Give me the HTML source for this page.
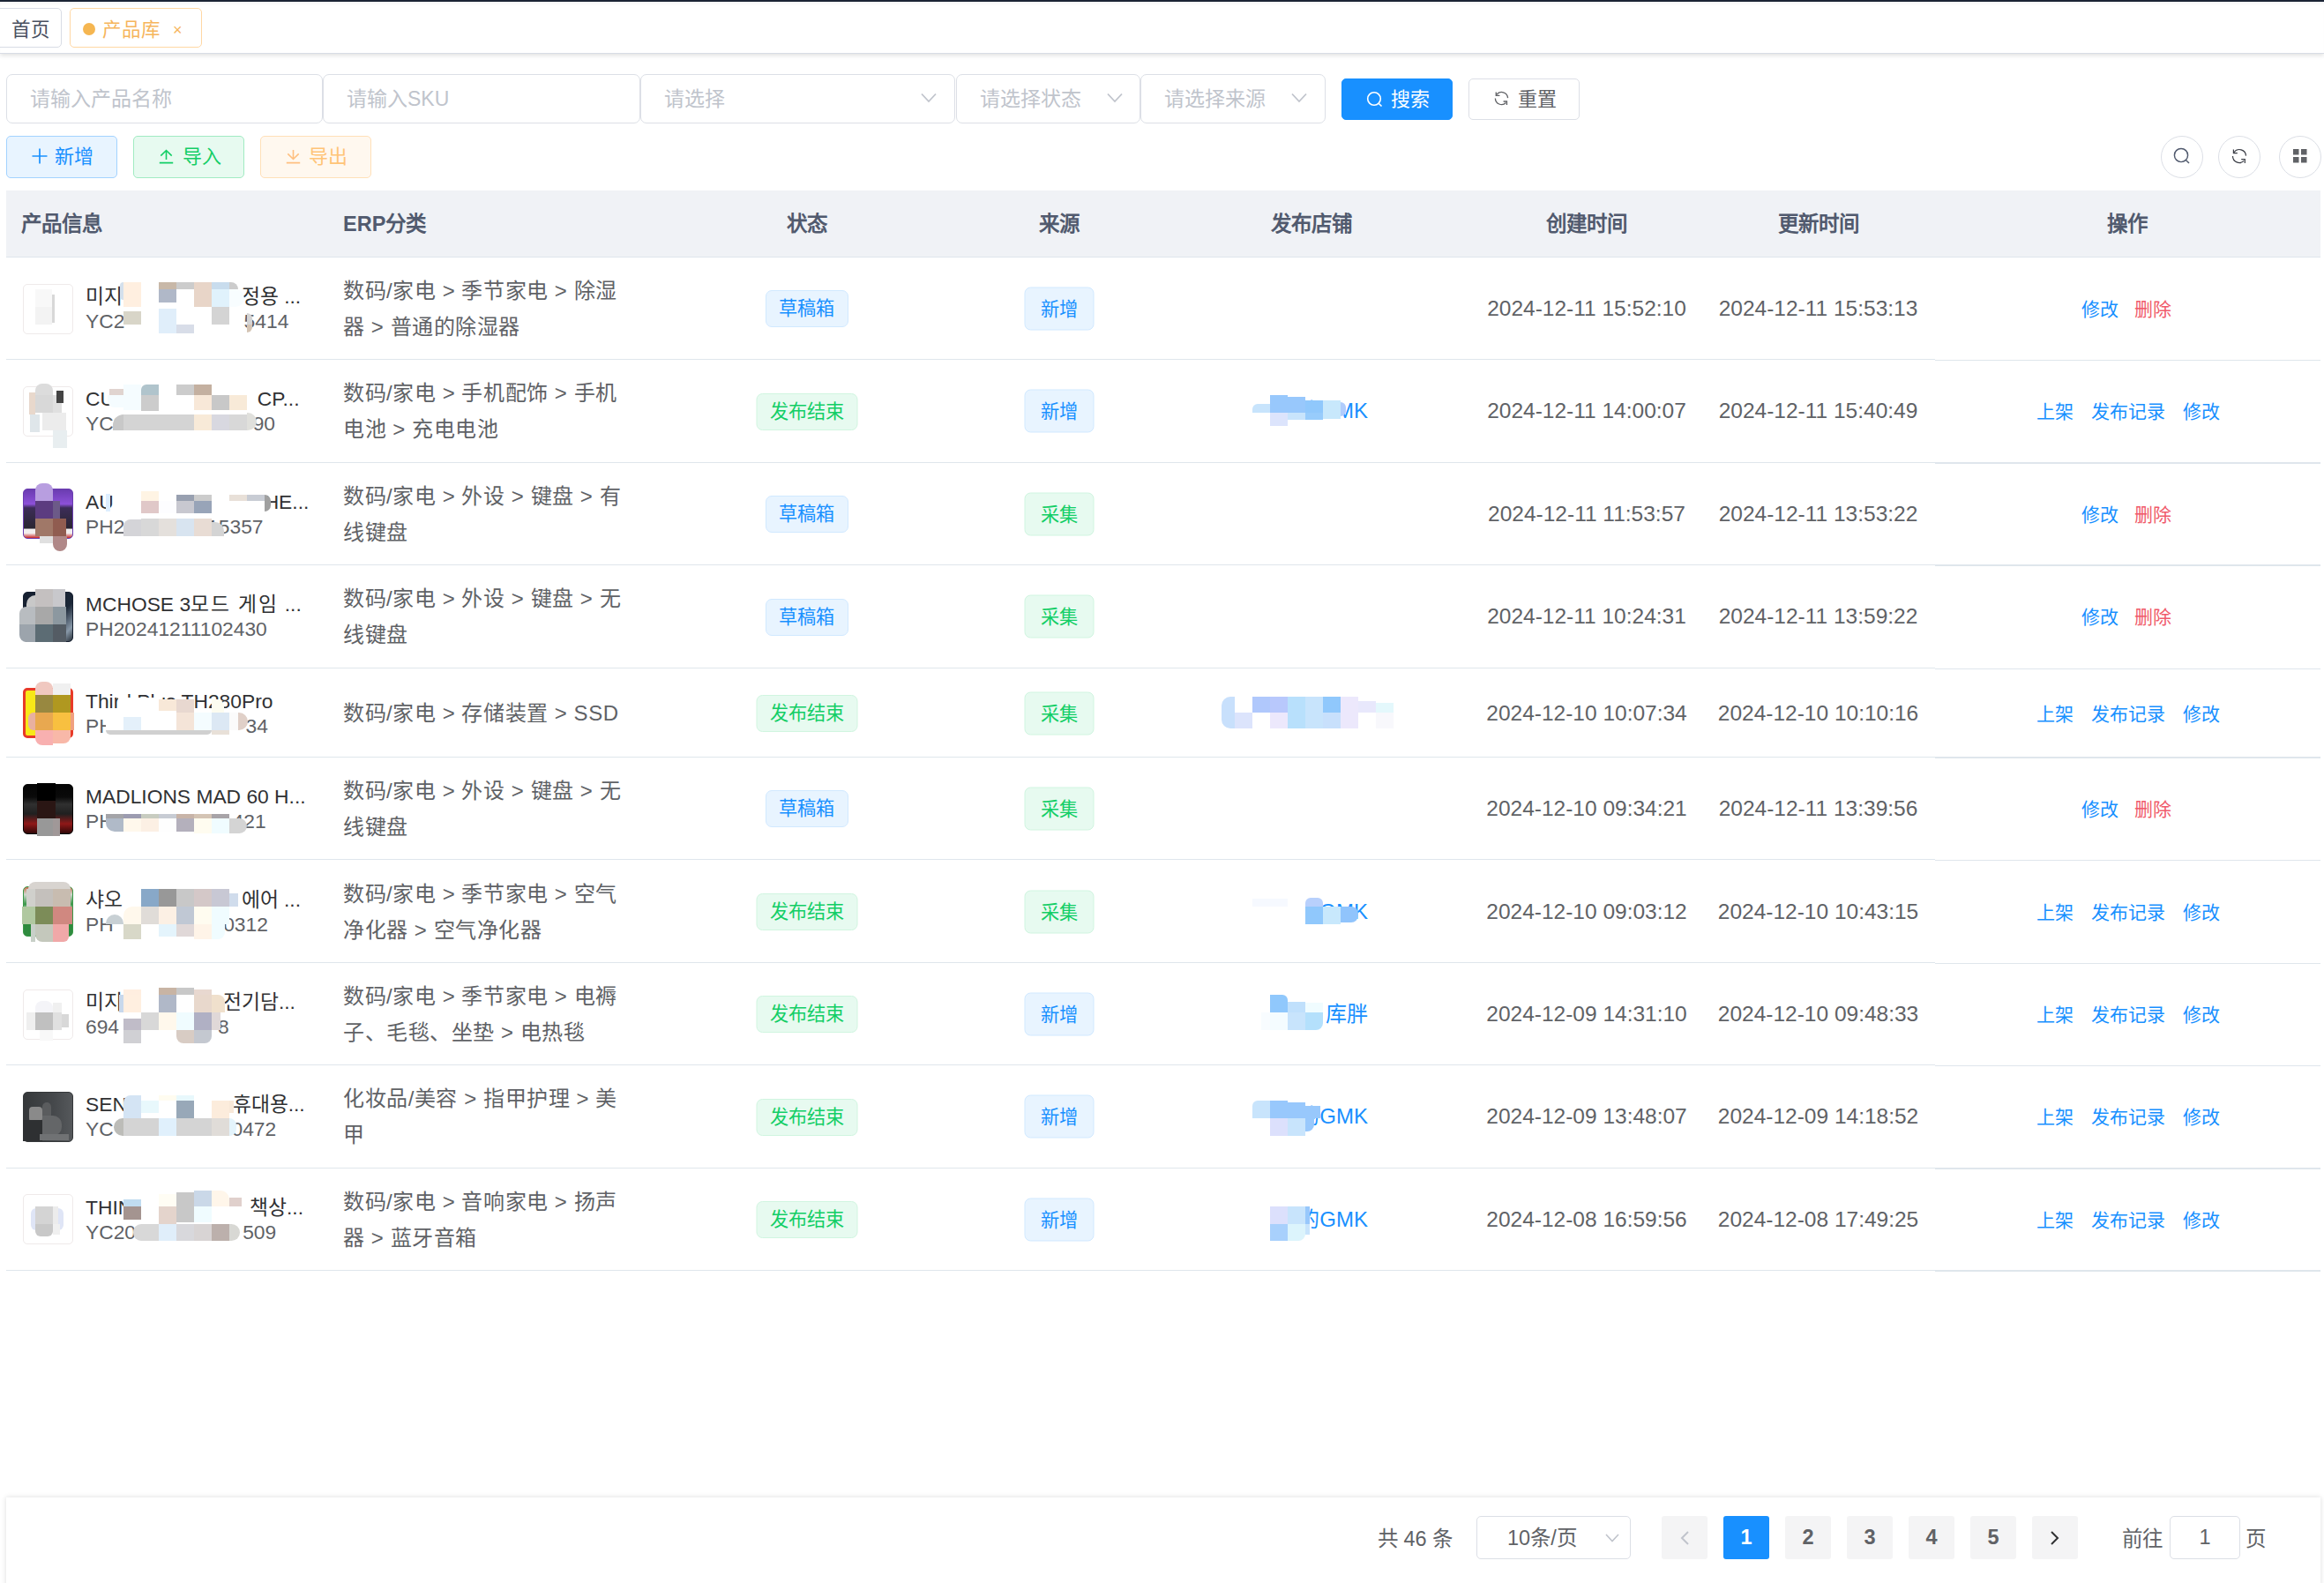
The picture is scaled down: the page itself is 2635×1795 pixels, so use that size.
<!DOCTYPE html>
<html lang="zh-CN">
<head>
<meta charset="utf-8">
<style>
*{box-sizing:border-box;margin:0;padding:0}
html,body{width:2635px;height:1795px;overflow:hidden;background:#fff;font-family:"Liberation Sans",sans-serif;color:#606266;font-weight:350}
.a{position:absolute}
#topbar{left:0;top:0;width:2635px;height:2px;background:#1c2536}
#tabs{left:0;top:2px;width:2635px;height:59px;background:#fff;box-shadow:inset 0 4px 5px -3px rgba(0,0,0,.06),0 2px 5px rgba(0,0,0,.12);border-bottom:1px solid #d8dce5}
.tab{position:absolute;top:9px;height:45px;border:1.5px solid #d8dce5;border-radius:5px;font-size:21.5px;line-height:48px;color:#495060;background:#fff}
.inp{position:absolute;top:84px;height:56px;border:1.5px solid #dcdfe6;border-radius:7px;background:#fff;font-size:23px;line-height:55px;color:#c0c4cc;padding-left:26px}
.chev{position:absolute;top:20px;width:18px;height:12px}
.btn{position:absolute;border-radius:5px;font-size:22px;text-align:center;border:1.5px solid #dcdfe6;background:#fff;color:#606266}
.cbtn{position:absolute;top:154px;width:48px;height:48px;border-radius:50%;border:1.5px solid #dcdfe6;background:#fff}
#thead{left:7px;top:216px;width:2624px;height:76.2px;background:#f0f2f6;border-bottom:1.5px solid #dfe6ec}
.th{position:absolute;top:0;line-height:76px;font-size:23.5px;font-weight:bold;color:#515a6e;white-space:nowrap}
.thc{transform:translateX(-50%)}
.row{position:absolute;left:7px;width:2624px;border-bottom:1.5px solid #dfe6ec}
.pimg{position:absolute;left:18.5px;width:57px;height:57px;border:1.5px solid #efeaea;border-radius:5px;background:#fff;overflow:hidden}
.pname{position:absolute;left:90px;font-size:22.8px;line-height:28px;white-space:nowrap}
.nm{color:#303133}
.sku{color:#606266}
.cat{position:absolute;left:382px;font-size:24px;line-height:41px;letter-spacing:0.55px;font-weight:350;color:#606266;white-space:nowrap}
.tagc{position:absolute;width:0;height:0}
.tag{position:absolute;transform:translate(-50%,-50%);white-space:nowrap;border:1.5px solid;border-radius:7px;font-size:21.2px;text-align:center}
.tag.sm{height:42px;line-height:40px;padding:0 14.5px}
.tag.md{height:49px;line-height:47px;padding:0 17.5px}
.tb{background:#e8f4ff;border-color:#d1e9ff;color:#1890ff}
.tg{background:#e7faf0;border-color:#d0f5e0;color:#13ce66}
.date{position:absolute;transform:translate(-50%,-50%);font-size:24.5px;line-height:32px;white-space:nowrap;color:#606266}
.ops{position:absolute;transform:translateY(-50%);font-size:21px;line-height:33px;white-space:nowrap}
.lk{color:#1890ff}
.lk.red{color:#f05a6a}
#footer{left:7px;top:1698px;width:2624px;height:120px;background:#fff;box-shadow:0 0 6px rgba(0,0,0,.14)}
.pgt{font-size:23.5px;line-height:30px;color:#606266;white-space:nowrap}
.psel{border:1.5px solid #dcdfe6;border-radius:5px;font-size:23.5px;line-height:48px;padding-left:34px;color:#606266}
.pbtn{top:1719px;width:52px;height:49px;border-radius:3px;background:#f4f4f5;font-size:23.5px;font-weight:bold;line-height:49px;text-align:center;color:#606266}
.pbtn.act{background:#1890ff;color:#fff}
.pinp{border:1.5px solid #dcdfe6;border-radius:5px;font-size:23.5px;line-height:46px;text-align:center;color:#606266}
.shop{position:absolute;right:1080px;transform:translateY(-50%);font-size:24px;line-height:32px;color:#1890ff;white-space:nowrap}
.mz{position:absolute}

</style>
</head>
<body>
<div id="topbar" class="a"></div>
<div id="tabs" class="a"></div>
<div class="tab" style="left:-6px;width:76px;padding-left:18px">首页</div>
<div class="tab" style="left:79px;width:150px;border-color:#ffd8a4;color:#f6b55c;padding-left:35.5px"><span class="a" style="left:14px;top:16px;width:14px;height:14px;border-radius:50%;background:#f5b651"></span>产品库<span class="a" style="left:116px;top:-0.5px;font-size:18px">×</span></div>

<div class="inp" style="left:7px;width:359px">请输入产品名称</div>
<div class="inp" style="left:366px;width:360px">请输入SKU</div>
<div class="inp" style="left:726px;width:357px">请选择<svg class="chev" style="left:317px" viewBox="0 0 18 12"><path d="M1 1.5 L9 10 L17 1.5" fill="none" stroke="#c0c4cc" stroke-width="1.8"/></svg></div>
<div class="inp" style="left:1084px;width:209px">请选择状态<svg class="chev" style="left:170px" viewBox="0 0 18 12"><path d="M1 1.5 L9 10 L17 1.5" fill="none" stroke="#c0c4cc" stroke-width="1.8"/></svg></div>
<div class="inp" style="left:1293px;width:210px">请选择来源<svg class="chev" style="left:170px" viewBox="0 0 18 12"><path d="M1 1.5 L9 10 L17 1.5" fill="none" stroke="#c0c4cc" stroke-width="1.8"/></svg></div>

<div class="btn" style="left:1521px;top:89px;width:126px;height:47px;line-height:45.5px;background:#1890ff;border-color:#1890ff;color:#fff">
<svg class="a" style="left:26.5px;top:12.5px" width="20" height="20" viewBox="0 0 20 20"><circle cx="9" cy="9" r="7.3" fill="none" stroke="#fff" stroke-width="1.6"/><path d="M14.2 14.2 L17.5 17.5" stroke="#fff" stroke-width="1.6"/></svg><span style="margin-left:29px">搜索</span></div>
<div class="btn" style="left:1665px;top:89px;width:126px;height:47px;line-height:45.5px">
<svg class="a" style="left:27.5px;top:13px" width="17" height="17" viewBox="0 0 18 18"><g fill="none" stroke="#606266" stroke-width="1.4"><path d="M3 4.6 A7.5 7.5 0 0 1 16.5 8.6"/><path d="M2.4 1.5 V5.7 H6.8"/><path d="M1.5 9 A7.5 7.5 0 0 0 14.2 14.4"/><path d="M11.2 12.7 H15.3 V17"/></g></svg><span style="margin-left:29px">重置</span></div>

<div class="btn" style="left:7px;top:154px;width:126px;height:48px;line-height:45px;background:#e8f4ff;border-color:#a3d3ff;color:#1890ff"><svg width="18" height="18" viewBox="0 0 18 18" style="vertical-align:-2px;margin-right:9.3px;position:relative;left:1.7px;top:-0.7px"><path d="M9 0.5 V17.5 M0.5 9 H17.5" stroke="#1890ff" stroke-width="1.7"/></svg>新增</div>
<div class="btn" style="left:151px;top:154px;width:126px;height:48px;line-height:45px;background:#e7faf0;border-color:#a1ebc2;color:#13ce66"><svg width="17" height="17" viewBox="0 0 17 17" style="vertical-align:-2px;margin-right:12px;position:relative;left:2px;top:-1.5px"><path d="M8.5 12 V1.5 M2.3 7.6 L8.5 1.5 L14.7 7.6 M0.8 15.6 H16.2" fill="none" stroke="#13ce66" stroke-width="1.6"/></svg>导入</div>
<div class="btn" style="left:295px;top:154px;width:126px;height:48px;line-height:45px;background:#fff8ef;border-color:#ffe0b8;color:#ffc477"><svg width="17" height="17" viewBox="0 0 17 17" style="vertical-align:-2px;margin-right:11.5px;position:relative;left:1.8px;top:-1.5px"><path d="M8.5 1 V11.5 M2.3 5.4 L8.5 11.5 L14.7 5.4 M0.8 15.6 H16.2" fill="none" stroke="#ffc080" stroke-width="1.6"/></svg>导出</div>

<div class="cbtn" style="left:2450px"><svg class="a" style="left:13px;top:12px" width="20" height="20" viewBox="0 0 20 20"><circle cx="9" cy="9" r="7.6" fill="none" stroke="#515a6e" stroke-width="1.45"/><path d="M14.4 14.4 L18 18" stroke="#515a6e" stroke-width="1.45"/></svg></div>
<div class="cbtn" style="left:2515px"><svg class="a" style="left:13.5px;top:12.5px" width="18" height="18" viewBox="0 0 18 18"><g fill="none" stroke="#3a3d45" stroke-width="1.2"><path d="M3 4.6 A7.5 7.5 0 0 1 16.5 8.6"/><path d="M2.4 1.5 V5.7 H6.8"/><path d="M1.5 9 A7.5 7.5 0 0 0 14.2 14.4"/><path d="M11.2 12.7 H15.3 V17"/></g></svg></div>
<div class="cbtn" style="left:2584px"><svg class="a" style="left:13.5px;top:13.2px" width="18" height="18" viewBox="0 0 18 18"><rect x="1" y="1" width="6.5" height="6.5" fill="#606266"/><rect x="10" y="1" width="6.5" height="6.5" fill="#606266"/><rect x="1" y="10" width="6.5" height="6.5" fill="#606266"/><rect x="10" y="10" width="6.5" height="6.5" fill="#606266"/></svg></div>

<div id="thead" class="a">
<div class="th" style="left:17px">产品信息</div>
<div class="th" style="left:382px">ERP分类</div>
<div class="th thc" style="left:907.6px">状态</div>
<div class="th thc" style="left:1193.8px">来源</div>
<div class="th thc" style="left:1479.5px">发布店铺</div>
<div class="th thc" style="left:1792px">创建时间</div>
<div class="th thc" style="left:2054.7px">更新时间</div>
<div class="th thc" style="left:2405px">操作</div>
</div>

<div id="footer" class="a"></div>
<div class="a pgt" style="left:1562px;top:1730px">共 46 条</div>
<div class="a psel" style="left:1674px;top:1719px;width:175px;height:49px">10条/页<svg class="a" style="left:145px;top:19px" width="16" height="10" viewBox="0 0 16 10"><path d="M1 1 L8 8.5 L15 1" fill="none" stroke="#c0c4cc" stroke-width="1.6"/></svg></div>
<div class="a pbtn" style="left:1884px"><svg width="12" height="18" viewBox="0 0 12 18" style="vertical-align:-2px"><path d="M10 2 L3 9 L10 16" fill="none" stroke="#c0c4cc" stroke-width="2"/></svg></div>
<div class="a pbtn act" style="left:1954px">1</div>
<div class="a pbtn" style="left:2024px">2</div>
<div class="a pbtn" style="left:2094px">3</div>
<div class="a pbtn" style="left:2164px">4</div>
<div class="a pbtn" style="left:2234px">5</div>
<div class="a pbtn" style="left:2304px"><svg width="12" height="18" viewBox="0 0 12 18" style="vertical-align:-2px"><path d="M2 2 L9 9 L2 16" fill="none" stroke="#303133" stroke-width="2"/></svg></div>
<div class="a pgt" style="left:2406px;top:1730px">前往</div>
<div class="a pinp" style="left:2460px;top:1719px;width:80px;height:49px">1</div>
<div class="a pgt" style="left:2546px;top:1730px">页</div>

<div class="row" style="top:292.2px;height:116.0px"><div class="pimg" style="top:29.5px;background:#fff"></div><div class="pname nm" style="top:30.0px">미지</div><div class="pname sku" style="top:58.0px">YC2</div><div class="pname nm" style="left:auto;right:2289.8px;top:30.0px">정용 ...</div><div class="pname sku" style="left:auto;right:2303.7px;top:58.0px">5414</div><div class="cat" style="top:17.0px">数码/家电 > 季节家电 > 除湿<br>器 > 普通的除湿器</div><div class="tagc" style="left:907.6px;top:58.3px"><span class="tag sm tb">草稿箱</span></div><div class="tagc" style="left:1193.8px;top:58.0px"><span class="tag md tb">新增</span></div><div class="date" style="left:1792px;top:58.0px">2024-12-11 15:52:10</div><div class="date" style="left:2054.5px;top:58.0px">2024-12-11 15:53:13</div><div class="ops" style="top:58.0px;left:2353px"><span class="lk">修改</span><span class="lk red" style="margin-left:18px">删除</span></div><div style="position:absolute;left:2187px;width:437px;top:114.5px;height:2.5px;background:linear-gradient(#fff 0,#fff 1px,#dfe6ec 1px)"></div></div><div class="row" style="top:408.2px;height:116.50000000000006px"><div class="pimg" style="top:29.75000000000003px;background:#fff"></div><div class="pname nm" style="top:30.25000000000003px">CU</div><div class="pname sku" style="top:58.25000000000003px">YC2</div><div class="pname nm" style="left:auto;right:2291.5px;top:30.25000000000003px">CP...</div><div class="pname sku" style="left:auto;right:2319px;top:58.25000000000003px">90</div><div class="shop" style="top:58.25000000000003px">的GMK</div><div class="cat" style="top:17.25000000000003px">数码/家电 > 手机配饰 > 手机<br>电池 > 充电电池</div><div class="tagc" style="left:907.6px;top:58.550000000000026px"><span class="tag sm tg">发布结束</span></div><div class="tagc" style="left:1193.8px;top:58.25000000000003px"><span class="tag md tb">新增</span></div><div class="date" style="left:1792px;top:58.25000000000003px">2024-12-11 14:00:07</div><div class="date" style="left:2054.5px;top:58.25000000000003px">2024-12-11 15:40:49</div><div class="ops" style="top:58.25000000000003px;left:2302px"><span class="lk">上架</span><span class="lk" style="margin-left:20px">发布记录</span><span class="lk" style="margin-left:20px">修改</span></div><div style="position:absolute;left:2187px;width:437px;top:115.00000000000006px;height:2.5px;background:linear-gradient(#fff 0,#fff 1px,#dfe6ec 1px)"></div></div><div class="row" style="top:524.7px;height:116.0px"><div class="pimg" style="top:29.5px;background:linear-gradient(180deg,#6a3cb0 0%,#8c50d8 30%,#3c2c58 38%,#2a2632 80%,#f2eeee 82%,#f2eeee 90%,#c82828 100%);border-color:#6a3cb0"></div><div class="pname nm" style="top:30.0px">AU</div><div class="pname sku" style="top:58.0px">PH2</div><div class="pname nm" style="left:auto;right:2280.7px;top:30.0px">HE...</div><div class="pname sku" style="left:auto;right:2332.5px;top:58.0px">15357</div><div class="cat" style="top:17.0px">数码/家电 > 外设 > 键盘 > 有<br>线键盘</div><div class="tagc" style="left:907.6px;top:58.3px"><span class="tag sm tb">草稿箱</span></div><div class="tagc" style="left:1193.8px;top:58.0px"><span class="tag md tg">采集</span></div><div class="date" style="left:1792px;top:58.0px">2024-12-11 11:53:57</div><div class="date" style="left:2054.5px;top:58.0px">2024-12-11 13:53:22</div><div class="ops" style="top:58.0px;left:2353px"><span class="lk">修改</span><span class="lk red" style="margin-left:18px">删除</span></div><div style="position:absolute;left:2187px;width:437px;top:114.5px;height:2.5px;background:linear-gradient(#fff 0,#fff 1px,#dfe6ec 1px)"></div></div><div class="row" style="top:640.7px;height:117.5px"><div class="pimg" style="top:30.25px;background:linear-gradient(135deg,#162030 0%,#1c2838 60%,#8898a8 85%,#283038 100%);border-color:#162030"></div><div class="pname nm" style="top:30.75px">MCHOSE 3<span style='letter-spacing:2px'>모드 게임</span> ...</div><div class="pname sku" style="top:58.75px">PH20241211102430</div><div class="cat" style="top:17.75px">数码/家电 > 外设 > 键盘 > 无<br>线键盘</div><div class="tagc" style="left:907.6px;top:59.05px"><span class="tag sm tb">草稿箱</span></div><div class="tagc" style="left:1193.8px;top:58.75px"><span class="tag md tg">采集</span></div><div class="date" style="left:1792px;top:58.75px">2024-12-11 10:24:31</div><div class="date" style="left:2054.5px;top:58.75px">2024-12-11 13:59:22</div><div class="ops" style="top:58.75px;left:2353px"><span class="lk">修改</span><span class="lk red" style="margin-left:18px">删除</span></div><div style="position:absolute;left:2187px;width:437px;top:116.0px;height:2.5px;background:linear-gradient(#fff 0,#fff 1px,#dfe6ec 1px)"></div></div><div class="row" style="top:758.2px;height:100.79999999999995px"><div class="pimg" style="top:21.899999999999977px;background:#f8e818;border:3px solid #e83a28"></div><div class="pname nm" style="top:22.399999999999977px">Third Plus TH280Pro</div><div class="pname sku" style="top:50.39999999999998px">PH</div><div class="pname sku" style="left:auto;right:2327.1px;top:50.39999999999998px">34</div><div class="cat" style="top:29.899999999999977px">数码/家电 > 存储装置 > SSD</div><div class="tagc" style="left:907.6px;top:50.699999999999974px"><span class="tag sm tg">发布结束</span></div><div class="tagc" style="left:1193.8px;top:50.39999999999998px"><span class="tag md tg">采集</span></div><div class="date" style="left:1792px;top:50.39999999999998px">2024-12-10 10:07:34</div><div class="date" style="left:2054.5px;top:50.39999999999998px">2024-12-10 10:10:16</div><div class="ops" style="top:50.39999999999998px;left:2302px"><span class="lk">上架</span><span class="lk" style="margin-left:20px">发布记录</span><span class="lk" style="margin-left:20px">修改</span></div><div style="position:absolute;left:2187px;width:437px;top:99.29999999999995px;height:2.5px;background:linear-gradient(#fff 0,#fff 1px,#dfe6ec 1px)"></div></div><div class="row" style="top:859.0px;height:116.20000000000005px"><div class="pimg" style="top:29.600000000000023px;background:linear-gradient(180deg,#050505 0%,#0a0a0a 25%,#303030 40%,#202020 60%,#901818 80%,#300808 100%);border-color:#050505"></div><div class="pname nm" style="top:30.100000000000023px">MADLIONS MAD 60 H...</div><div class="pname sku" style="top:58.10000000000002px">PH</div><div class="pname sku" style="left:auto;right:2329.4px;top:58.10000000000002px">421</div><div class="cat" style="top:17.100000000000023px">数码/家电 > 外设 > 键盘 > 无<br>线键盘</div><div class="tagc" style="left:907.6px;top:58.40000000000002px"><span class="tag sm tb">草稿箱</span></div><div class="tagc" style="left:1193.8px;top:58.10000000000002px"><span class="tag md tg">采集</span></div><div class="date" style="left:1792px;top:58.10000000000002px">2024-12-10 09:34:21</div><div class="date" style="left:2054.5px;top:58.10000000000002px">2024-12-11 13:39:56</div><div class="ops" style="top:58.10000000000002px;left:2353px"><span class="lk">修改</span><span class="lk red" style="margin-left:18px">删除</span></div><div style="position:absolute;left:2187px;width:437px;top:114.70000000000005px;height:2.5px;background:linear-gradient(#fff 0,#fff 1px,#dfe6ec 1px)"></div></div><div class="row" style="top:975.2px;height:117.0px"><div class="pimg" style="top:30.0px;background:linear-gradient(180deg,#c87050 0%,#d0d8d0 15%,#3a9848 35%,#e8e8e8 50%,#2c8a3c 70%,#308c40 100%);border-color:#3a9848"></div><div class="pname nm" style="top:30.5px">샤오</div><div class="pname sku" style="top:58.5px">PH</div><div class="pname nm" style="left:auto;right:2290px;top:30.5px">에어 ...</div><div class="pname sku" style="left:auto;right:2327.1px;top:58.5px">0312</div><div class="shop" style="top:58.5px">GMK</div><div class="cat" style="top:17.5px">数码/家电 > 季节家电 > 空气<br>净化器 > 空气净化器</div><div class="tagc" style="left:907.6px;top:58.8px"><span class="tag sm tg">发布结束</span></div><div class="tagc" style="left:1193.8px;top:58.5px"><span class="tag md tg">采集</span></div><div class="date" style="left:1792px;top:58.5px">2024-12-10 09:03:12</div><div class="date" style="left:2054.5px;top:58.5px">2024-12-10 10:43:15</div><div class="ops" style="top:58.5px;left:2302px"><span class="lk">上架</span><span class="lk" style="margin-left:20px">发布记录</span><span class="lk" style="margin-left:20px">修改</span></div><div style="position:absolute;left:2187px;width:437px;top:115.5px;height:2.5px;background:linear-gradient(#fff 0,#fff 1px,#dfe6ec 1px)"></div></div><div class="row" style="top:1092.2px;height:116.0px"><div class="pimg" style="top:29.5px;background:#fff"></div><div class="pname nm" style="top:30.0px">미지</div><div class="pname sku" style="top:58.0px">694</div><div class="pname nm" style="left:auto;right:2296.1px;top:30.0px">전기담...</div><div class="pname sku" style="left:auto;right:2371.3px;top:58.0px">8</div><div class="shop" style="top:58.0px">库胖</div><div class="cat" style="top:17.0px">数码/家电 > 季节家电 > 电褥<br>子、毛毯、坐垫 > 电热毯</div><div class="tagc" style="left:907.6px;top:58.3px"><span class="tag sm tg">发布结束</span></div><div class="tagc" style="left:1193.8px;top:58.0px"><span class="tag md tb">新增</span></div><div class="date" style="left:1792px;top:58.0px">2024-12-09 14:31:10</div><div class="date" style="left:2054.5px;top:58.0px">2024-12-10 09:48:33</div><div class="ops" style="top:58.0px;left:2302px"><span class="lk">上架</span><span class="lk" style="margin-left:20px">发布记录</span><span class="lk" style="margin-left:20px">修改</span></div><div style="position:absolute;left:2187px;width:437px;top:114.5px;height:2.5px;background:linear-gradient(#fff 0,#fff 1px,#dfe6ec 1px)"></div></div><div class="row" style="top:1208.2px;height:116.5px"><div class="pimg" style="top:29.75px;background:linear-gradient(90deg,#35383a 0%,#45484b 60%,#55585b 100%);border-color:#35383a"></div><div class="pname nm" style="top:30.25px">SEN</div><div class="pname sku" style="top:58.25px">YC</div><div class="pname nm" style="left:auto;right:2285.3px;top:30.25px">휴대용...</div><div class="pname sku" style="left:auto;right:2317.8px;top:58.25px">0472</div><div class="shop" style="top:58.25px">的GMK</div><div class="cat" style="top:17.25px">化妆品/美容 > 指甲护理 > 美<br>甲</div><div class="tagc" style="left:907.6px;top:58.55px"><span class="tag sm tg">发布结束</span></div><div class="tagc" style="left:1193.8px;top:58.25px"><span class="tag md tb">新增</span></div><div class="date" style="left:1792px;top:58.25px">2024-12-09 13:48:07</div><div class="date" style="left:2054.5px;top:58.25px">2024-12-09 14:18:52</div><div class="ops" style="top:58.25px;left:2302px"><span class="lk">上架</span><span class="lk" style="margin-left:20px">发布记录</span><span class="lk" style="margin-left:20px">修改</span></div><div style="position:absolute;left:2187px;width:437px;top:115.0px;height:2.5px;background:linear-gradient(#fff 0,#fff 1px,#dfe6ec 1px)"></div></div><div class="row" style="top:1324.7px;height:116.29999999999995px"><div class="pimg" style="top:29.649999999999977px;background:#fff"></div><div class="pname nm" style="top:30.149999999999977px">THIN</div><div class="pname sku" style="top:58.14999999999998px">YC20</div><div class="pname nm" style="left:auto;right:2287px;top:30.149999999999977px">책상...</div><div class="pname sku" style="left:auto;right:2317.8px;top:58.14999999999998px">509</div><div class="shop" style="top:58.14999999999998px">的GMK</div><div class="cat" style="top:17.149999999999977px">数码/家电 > 音响家电 > 扬声<br>器 > 蓝牙音箱</div><div class="tagc" style="left:907.6px;top:58.449999999999974px"><span class="tag sm tg">发布结束</span></div><div class="tagc" style="left:1193.8px;top:58.14999999999998px"><span class="tag md tb">新增</span></div><div class="date" style="left:1792px;top:58.14999999999998px">2024-12-08 16:59:56</div><div class="date" style="left:2054.5px;top:58.14999999999998px">2024-12-08 17:49:25</div><div class="ops" style="top:58.14999999999998px;left:2302px"><span class="lk">上架</span><span class="lk" style="margin-left:20px">发布记录</span><span class="lk" style="margin-left:20px">修改</span></div><div style="position:absolute;left:2187px;width:437px;top:114.79999999999995px;height:2.5px;background:linear-gradient(#fff 0,#fff 1px,#dfe6ec 1px)"></div></div><div class="mz" style="left:136px;top:320px;width:4px;height:20px;background:#d4e0ec;border-radius:6px 0 0 6px"></div><div class="mz" style="left:140px;top:320px;width:20px;height:28px;background:#ffefe0;"></div><div class="mz" style="left:180px;top:320px;width:20px;height:8px;background:#c8b8a8;"></div><div class="mz" style="left:200px;top:320px;width:20px;height:8px;background:#cccccc;"></div><div class="mz" style="left:220px;top:320px;width:20px;height:28px;background:#e8d5c8;"></div><div class="mz" style="left:240px;top:320px;width:20px;height:8px;background:#c8dced;"></div><div class="mz" style="left:260px;top:320px;width:10px;height:8px;background:#cccccc;border-radius:0 8px 0 0"></div><div class="mz" style="left:180px;top:328px;width:20px;height:15px;background:#b0b8c8;"></div><div class="mz" style="left:200px;top:328px;width:20px;height:20px;background:#ffffff;"></div><div class="mz" style="left:240px;top:328px;width:20px;height:20px;background:#e0f2fc;"></div><div class="mz" style="left:260px;top:328px;width:17px;height:20px;background:#f8fdff;border-radius:0 10px 10px 0"></div><div class="mz" style="left:140px;top:353px;width:20px;height:15px;background:#d8d5c8;"></div><div class="mz" style="left:180px;top:350px;width:20px;height:28px;background:#e0eefa;"></div><div class="mz" style="left:200px;top:368px;width:20px;height:10px;background:#d8dde8;"></div><div class="mz" style="left:240px;top:348px;width:20px;height:20px;background:#d4d4d4;"></div><div class="mz" style="left:280px;top:355px;width:6px;height:13px;background:#d4d4d4;border-radius:0 6px 0 0"></div><div class="mz" style="left:280px;top:368px;width:6px;height:9px;background:#d4c4b4;border-radius:0 0 6px 0"></div><div class="mz" style="left:40px;top:328px;width:19px;height:20px;background:#f8f8f8;"></div><div class="mz" style="left:40px;top:348px;width:19px;height:20px;background:#f3f3f3;"></div><div class="mz" style="left:59px;top:334px;width:3px;height:32px;background:#d8d8d8;"></div><div class="mz" style="left:40px;top:435px;width:20px;height:13px;background:#dcdcdc;border-radius:8px 8px 0 0"></div><div class="mz" style="left:40px;top:448px;width:20px;height:20px;background:#d8d8d8;"></div><div class="mz" style="left:60px;top:448px;width:10px;height:20px;background:#e0e0e0;"></div><div class="mz" style="left:48px;top:468px;width:12px;height:20px;background:#ececec;"></div><div class="mz" style="left:60px;top:468px;width:15px;height:20px;background:#ececec;"></div><div class="mz" style="left:60px;top:488px;width:16px;height:20px;background:#e8eef0;"></div><div class="mz" style="left:33px;top:445px;width:7px;height:25px;background:#e8d8cc;"></div><div class="mz" style="left:64px;top:443px;width:8px;height:14px;background:#444;"></div><div class="mz" style="left:34px;top:470px;width:11px;height:20px;background:#dfe6ea;"></div><div class="mz" style="left:124px;top:441px;width:16px;height:7px;background:#e0d4d0;"></div><div class="mz" style="left:122px;top:448px;width:18px;height:14px;background:#f5fcff;border-radius:0 0 0 8px"></div><div class="mz" style="left:140px;top:436px;width:20px;height:29px;background:#f5fcff;"></div><div class="mz" style="left:160px;top:436px;width:20px;height:12px;background:#b0c4cc;border-radius:6px 0 0 0"></div><div class="mz" style="left:160px;top:448px;width:20px;height:18px;background:#cccccc;"></div><div class="mz" style="left:200px;top:436px;width:20px;height:12px;background:#cccccc;"></div><div class="mz" style="left:220px;top:436px;width:20px;height:12px;background:#c4b0a0;"></div><div class="mz" style="left:220px;top:448px;width:20px;height:17px;background:#f8e8d8;"></div><div class="mz" style="left:240px;top:448px;width:20px;height:17px;background:#c8c8c8;"></div><div class="mz" style="left:260px;top:448px;width:20px;height:17px;background:#f8ead8;"></div><div class="mz" style="left:128px;top:470px;width:12px;height:18px;background:#c8c8c8;border-radius:12px 0 0 0"></div><div class="mz" style="left:140px;top:470px;width:80px;height:18px;background:#d4d4d4;"></div><div class="mz" style="left:220px;top:470px;width:20px;height:18px;background:#f8ead8;"></div><div class="mz" style="left:240px;top:470px;width:20px;height:18px;background:#d8d8e0;"></div><div class="mz" style="left:260px;top:470px;width:20px;height:18px;background:#d8d8d8;"></div><div class="mz" style="left:280px;top:468px;width:11px;height:20px;background:#e0e0dc;border-radius:0 10px 10px 0"></div><div class="mz" style="left:40px;top:548px;width:20px;height:20px;background:#b89ee0;border-radius:8px 8px 0 0"></div><div class="mz" style="left:40px;top:568px;width:20px;height:20px;background:#5c3c80;"></div><div class="mz" style="left:60px;top:568px;width:8px;height:20px;background:#6c5a88;"></div><div class="mz" style="left:40px;top:588px;width:20px;height:20px;background:#a07868;"></div><div class="mz" style="left:60px;top:588px;width:15px;height:20px;background:#905c50;"></div><div class="mz" style="left:45px;top:608px;width:15px;height:8px;background:#e0e0e0;"></div><div class="mz" style="left:60px;top:608px;width:16px;height:17px;background:#b08888;border-radius:0 0 10px 10px"></div><div class="mz" style="left:120px;top:560px;width:5px;height:20px;background:#ddeeff;"></div><div class="mz" style="left:160px;top:557px;width:20px;height:11px;background:#fff4e4;"></div><div class="mz" style="left:200px;top:561px;width:20px;height:7px;background:#98a0b0;"></div><div class="mz" style="left:220px;top:561px;width:20px;height:7px;background:#cccccc;"></div><div class="mz" style="left:260px;top:561px;width:20px;height:7px;background:#e8e0d8;"></div><div class="mz" style="left:280px;top:561px;width:20px;height:7px;background:#c8ccd4;"></div><div class="mz" style="left:300px;top:561px;width:7px;height:19px;background:#a0a0a0;border-radius:0 8px 8px 0"></div><div class="mz" style="left:160px;top:568px;width:20px;height:14px;background:#e0c8c8;"></div><div class="mz" style="left:180px;top:568px;width:20px;height:14px;background:#fdfdff;"></div><div class="mz" style="left:200px;top:568px;width:20px;height:14px;background:#c8c8d0;"></div><div class="mz" style="left:220px;top:568px;width:20px;height:14px;background:#98a4b8;"></div><div class="mz" style="left:140px;top:589px;width:20px;height:19px;background:#d4d4d8;border-radius:8px 0 0 0"></div><div class="mz" style="left:160px;top:588px;width:20px;height:20px;background:#d8d8d8;"></div><div class="mz" style="left:180px;top:588px;width:20px;height:20px;background:#e4e0dc;"></div><div class="mz" style="left:200px;top:588px;width:20px;height:20px;background:#d8e4f0;"></div><div class="mz" style="left:220px;top:588px;width:20px;height:20px;background:#e8dcd4;"></div><div class="mz" style="left:240px;top:592px;width:14px;height:16px;background:#d4d4d4;border-radius:0 10px 0 0"></div><div class="mz" style="left:40px;top:668px;width:20px;height:20px;background:#c4c0c0;"></div><div class="mz" style="left:60px;top:668px;width:14px;height:20px;background:#c8c8cc;"></div><div class="mz" style="left:30px;top:675px;width:10px;height:13px;background:#c8c8c8;border-radius:10px 0 0 0"></div><div class="mz" style="left:22px;top:688px;width:18px;height:20px;background:#b8bcc0;border-radius:8px 0 0 0"></div><div class="mz" style="left:40px;top:688px;width:20px;height:20px;background:#a8a8a8;"></div><div class="mz" style="left:60px;top:688px;width:15px;height:20px;background:#8c98a0;"></div><div class="mz" style="left:22px;top:708px;width:18px;height:20px;background:#9ca4ac;border-radius:0 0 0 8px"></div><div class="mz" style="left:40px;top:708px;width:20px;height:20px;background:#5c6c74;"></div><div class="mz" style="left:60px;top:708px;width:15px;height:20px;background:#545c64;"></div><div class="mz" style="left:40px;top:773px;width:20px;height:15px;background:#f0c8c0;border-radius:8px 8px 0 0"></div><div class="mz" style="left:60px;top:775px;width:20px;height:13px;background:#f0f0f0;"></div><div class="mz" style="left:40px;top:788px;width:20px;height:20px;background:#988840;"></div><div class="mz" style="left:60px;top:788px;width:20px;height:20px;background:#b09820;"></div><div class="mz" style="left:32px;top:808px;width:8px;height:20px;background:#e8b0a0;border-radius:6px 0 0 6px"></div><div class="mz" style="left:40px;top:808px;width:20px;height:20px;background:#e8a850;"></div><div class="mz" style="left:60px;top:808px;width:20px;height:20px;background:#f8c040;"></div><div class="mz" style="left:80px;top:808px;width:4px;height:20px;background:#f0a080;"></div><div class="mz" style="left:40px;top:828px;width:20px;height:17px;background:#f8b0b0;border-radius:0 0 0 8px"></div><div class="mz" style="left:60px;top:828px;width:20px;height:15px;background:#f8b8a8;border-radius:0 0 8px 0"></div><div class="mz" style="left:134px;top:791px;width:46px;height:17px;background:#ffffff;"></div><div class="mz" style="left:120px;top:808px;width:20px;height:20px;background:#ffffff;"></div><div class="mz" style="left:180px;top:793px;width:20px;height:15px;background:#f8e8d8;"></div><div class="mz" style="left:200px;top:793px;width:20px;height:15px;background:#e8d8d0;"></div><div class="mz" style="left:240px;top:793px;width:14px;height:15px;background:#fcfcf0;border-radius:0 8px 0 0"></div><div class="mz" style="left:140px;top:813px;width:20px;height:15px;background:#e4f0fa;"></div><div class="mz" style="left:160px;top:806px;width:40px;height:22px;background:#ffffff;"></div><div class="mz" style="left:200px;top:808px;width:20px;height:20px;background:#f4e4d8;"></div><div class="mz" style="left:220px;top:808px;width:20px;height:20px;background:#f4fcff;"></div><div class="mz" style="left:240px;top:808px;width:20px;height:20px;background:#dce8f4;"></div><div class="mz" style="left:260px;top:808px;width:10px;height:20px;background:#fbfbfb;"></div><div class="mz" style="left:270px;top:808px;width:11px;height:20px;background:#e0d0c8;border-radius:0 10px 10px 0"></div><div class="mz" style="left:120px;top:828px;width:120px;height:5px;background:#d0d0d0;border-radius:0 0 6px 6px"></div><div class="mz" style="left:240px;top:828px;width:20px;height:5px;background:#e8e0d8;"></div><div class="mz" style="left:42px;top:888px;width:21px;height:20px;background:#000000;"></div><div class="mz" style="left:42px;top:908px;width:21px;height:20px;background:#2a1614;"></div><div class="mz" style="left:42px;top:928px;width:18px;height:20px;background:#989898;"></div><div class="mz" style="left:60px;top:928px;width:8px;height:20px;background:#a09898;"></div><div class="mz" style="left:120px;top:923px;width:20px;height:5px;background:#a4a4a8;"></div><div class="mz" style="left:140px;top:923px;width:20px;height:5px;background:#9c9cb0;"></div><div class="mz" style="left:160px;top:923px;width:20px;height:5px;background:#c8ccc0;"></div><div class="mz" style="left:180px;top:923px;width:20px;height:5px;background:#c8ccd4;"></div><div class="mz" style="left:200px;top:923px;width:20px;height:5px;background:#c8b4a8;"></div><div class="mz" style="left:220px;top:923px;width:20px;height:5px;background:#d4c4b4;"></div><div class="mz" style="left:240px;top:923px;width:20px;height:5px;background:#a8a4a8;"></div><div class="mz" style="left:120px;top:928px;width:20px;height:15px;background:#b0bac8;border-radius:0 0 0 10px"></div><div class="mz" style="left:140px;top:928px;width:20px;height:15px;background:#fff8ec;"></div><div class="mz" style="left:160px;top:928px;width:20px;height:15px;background:#fcf0e4;"></div><div class="mz" style="left:180px;top:928px;width:20px;height:15px;background:#fefefe;"></div><div class="mz" style="left:200px;top:928px;width:20px;height:15px;background:#b4b0bc;"></div><div class="mz" style="left:220px;top:928px;width:20px;height:17px;background:#fffcf0;"></div><div class="mz" style="left:240px;top:928px;width:20px;height:17px;background:#f0fcff;"></div><div class="mz" style="left:260px;top:928px;width:20px;height:17px;background:#d4d4d4;border-radius:0 10px 10px 0"></div><div class="mz" style="left:32px;top:1000px;width:48px;height:8px;background:#d8d4d0;border-radius:8px 8px 0 0"></div><div class="mz" style="left:30px;top:1008px;width:10px;height:20px;background:#d0d0cc;"></div><div class="mz" style="left:40px;top:1008px;width:20px;height:20px;background:#c4c0bc;"></div><div class="mz" style="left:60px;top:1008px;width:20px;height:20px;background:#c8bcb0;"></div><div class="mz" style="left:25px;top:1028px;width:15px;height:20px;background:#b0c8a0;"></div><div class="mz" style="left:40px;top:1028px;width:20px;height:20px;background:#7c8c58;"></div><div class="mz" style="left:60px;top:1028px;width:22px;height:20px;background:#d08880;"></div><div class="mz" style="left:35px;top:1048px;width:5px;height:20px;background:#c8d0c8;"></div><div class="mz" style="left:40px;top:1048px;width:20px;height:20px;background:#c4c8bc;border-radius:0 0 0 8px"></div><div class="mz" style="left:60px;top:1048px;width:18px;height:20px;background:#f0a8a8;border-radius:0 0 6px 0"></div><div class="mz" style="left:160px;top:1008px;width:20px;height:20px;background:#88a8c8;"></div><div class="mz" style="left:180px;top:1008px;width:20px;height:20px;background:#989898;"></div><div class="mz" style="left:200px;top:1008px;width:20px;height:20px;background:#c8c8c8;"></div><div class="mz" style="left:220px;top:1008px;width:20px;height:20px;background:#d4c8c8;"></div><div class="mz" style="left:240px;top:1008px;width:20px;height:20px;background:#c8c8d4;"></div><div class="mz" style="left:260px;top:1013px;width:10px;height:15px;background:#d0dcec;"></div><div class="mz" style="left:120px;top:1037px;width:20px;height:11px;background:#c8d0d4;border-radius:10px 10px 0 0"></div><div class="mz" style="left:140px;top:1028px;width:20px;height:20px;background:#fff8ec;border-radius:10px 0 0 0"></div><div class="mz" style="left:160px;top:1028px;width:20px;height:20px;background:#e0dcd8;"></div><div class="mz" style="left:180px;top:1028px;width:20px;height:20px;background:#fcf0e4;"></div><div class="mz" style="left:200px;top:1028px;width:20px;height:20px;background:#c0c8d4;"></div><div class="mz" style="left:220px;top:1028px;width:20px;height:20px;background:#fffcf0;"></div><div class="mz" style="left:240px;top:1028px;width:20px;height:20px;background:#f0fcff;"></div><div class="mz" style="left:140px;top:1048px;width:20px;height:17px;background:#d8d8c8;"></div><div class="mz" style="left:180px;top:1048px;width:20px;height:14px;background:#e4f4fc;"></div><div class="mz" style="left:200px;top:1048px;width:20px;height:14px;background:#e0d8d8;"></div><div class="mz" style="left:220px;top:1048px;width:20px;height:17px;background:#fff4e8;"></div><div class="mz" style="left:240px;top:1048px;width:15px;height:17px;background:#f0fcff;border-radius:0 0 8px 0"></div><div class="mz" style="left:40px;top:1135px;width:20px;height:13px;background:#f4f4f8;border-radius:8px 8px 0 0"></div><div class="mz" style="left:60px;top:1137px;width:10px;height:11px;background:#f0f0f0;"></div><div class="mz" style="left:30px;top:1148px;width:10px;height:20px;background:#efefef;"></div><div class="mz" style="left:40px;top:1148px;width:20px;height:20px;background:#c0c0c0;"></div><div class="mz" style="left:60px;top:1148px;width:10px;height:20px;background:#e0e0e0;"></div><div class="mz" style="left:45px;top:1168px;width:15px;height:12px;background:#f8f8f8;"></div><div class="mz" style="left:70px;top:1150px;width:8px;height:15px;background:#d8d8d8;"></div><div class="mz" style="left:140px;top:1122px;width:20px;height:6px;background:#ffeee0;"></div><div class="mz" style="left:180px;top:1120px;width:20px;height:8px;background:#c8b4a4;"></div><div class="mz" style="left:200px;top:1120px;width:20px;height:8px;background:#c8c8c8;"></div><div class="mz" style="left:220px;top:1122px;width:20px;height:6px;background:#e8d8d0;"></div><div class="mz" style="left:135px;top:1128px;width:5px;height:20px;background:#c8d8ec;"></div><div class="mz" style="left:140px;top:1128px;width:20px;height:20px;background:#ffefe0;"></div><div class="mz" style="left:180px;top:1128px;width:20px;height:20px;background:#b0b8c8;"></div><div class="mz" style="left:200px;top:1128px;width:20px;height:20px;background:#ffffff;"></div><div class="mz" style="left:220px;top:1128px;width:20px;height:20px;background:#e8d8cc;"></div><div class="mz" style="left:240px;top:1128px;width:15px;height:20px;background:#f0e0cc;border-radius:0 8px 0 0"></div><div class="mz" style="left:140px;top:1155px;width:20px;height:13px;background:#c0bcc8;"></div><div class="mz" style="left:160px;top:1148px;width:20px;height:20px;background:#d8d8d8;"></div><div class="mz" style="left:180px;top:1148px;width:20px;height:20px;background:#fff8ec;"></div><div class="mz" style="left:200px;top:1148px;width:20px;height:20px;background:#f0fcff;"></div><div class="mz" style="left:220px;top:1148px;width:20px;height:20px;background:#b0b0c4;"></div><div class="mz" style="left:240px;top:1148px;width:10px;height:20px;background:#e0d8d8;"></div><div class="mz" style="left:140px;top:1168px;width:20px;height:15px;background:#d0d0d4;"></div><div class="mz" style="left:200px;top:1168px;width:20px;height:15px;background:#d8ccc4;border-radius:0 0 0 8px"></div><div class="mz" style="left:220px;top:1168px;width:20px;height:15px;background:#c4c8d0;border-radius:0 0 8px 0"></div><div class="mz" style="left:33px;top:1255px;width:15px;height:17px;background:#8a8a8a;border-radius:4px"></div><div class="mz" style="left:48px;top:1250px;width:10px;height:35px;background:#5a5c5e;border-radius:6px"></div><div class="mz" style="left:48px;top:1265px;width:22px;height:23px;background:#646668;border-radius:0 10px 10px 0"></div><div class="mz" style="left:26px;top:1270px;width:22px;height:24px;background:#2e3032;"></div><div class="mz" style="left:45px;top:1286px;width:33px;height:7px;background:#707274;"></div><div class="mz" style="left:140px;top:1242px;width:20px;height:26px;background:#d4e4f4;border-radius:8px 0 0 0"></div><div class="mz" style="left:180px;top:1242px;width:20px;height:6px;background:#fffcf0;"></div><div class="mz" style="left:200px;top:1242px;width:20px;height:6px;background:#e8f8fc;"></div><div class="mz" style="left:160px;top:1248px;width:20px;height:14px;background:#e8f8fc;"></div><div class="mz" style="left:200px;top:1248px;width:20px;height:20px;background:#98a8b8;"></div><div class="mz" style="left:240px;top:1248px;width:20px;height:20px;background:#fcecdc;"></div><div class="mz" style="left:260px;top:1248px;width:5px;height:14px;background:#f8e8d8;"></div><div class="mz" style="left:129px;top:1268px;width:11px;height:20px;background:#bcbcb8;border-radius:10px 0 0 10px"></div><div class="mz" style="left:140px;top:1268px;width:40px;height:20px;background:#d4d4d4;"></div><div class="mz" style="left:180px;top:1268px;width:20px;height:20px;background:#e0f0fc;"></div><div class="mz" style="left:200px;top:1268px;width:40px;height:20px;background:#d4d4d4;"></div><div class="mz" style="left:240px;top:1268px;width:20px;height:20px;background:#e0dcd8;"></div><div class="mz" style="left:260px;top:1268px;width:8px;height:20px;background:#e4f4fc;border-radius:0 8px 8px 0"></div><div class="mz" style="left:35px;top:1370px;width:37px;height:25px;background:#dfe5f6;border-radius:6px"></div><div class="mz" style="left:40px;top:1368px;width:20px;height:20px;background:#d4d4d4;"></div><div class="mz" style="left:60px;top:1368px;width:6px;height:20px;background:#ececec;"></div><div class="mz" style="left:40px;top:1388px;width:20px;height:14px;background:#c8c8c8;border-radius:0 0 6px 6px"></div><div class="mz" style="left:60px;top:1388px;width:8px;height:12px;background:#f0f0f0;"></div><div class="mz" style="left:140px;top:1360px;width:20px;height:8px;background:#c0dcf0;"></div><div class="mz" style="left:180px;top:1354px;width:20px;height:14px;background:#fffdf4;"></div><div class="mz" style="left:200px;top:1352px;width:20px;height:16px;background:#c8c8c8;"></div><div class="mz" style="left:220px;top:1350px;width:20px;height:18px;background:#cad8e8;"></div><div class="mz" style="left:240px;top:1350px;width:20px;height:18px;background:#fff6ea;border-radius:0 10px 0 0"></div><div class="mz" style="left:260px;top:1358px;width:14px;height:10px;background:#e0d0cc;"></div><div class="mz" style="left:140px;top:1368px;width:20px;height:15px;background:#a49490;"></div><div class="mz" style="left:180px;top:1368px;width:20px;height:20px;background:#e4d4cc;"></div><div class="mz" style="left:200px;top:1368px;width:20px;height:18px;background:#c8c8c8;"></div><div class="mz" style="left:220px;top:1368px;width:20px;height:18px;background:#f0fcff;"></div><div class="mz" style="left:151px;top:1388px;width:9px;height:19px;background:#d8d8d8;border-radius:10px 0 0 10px"></div><div class="mz" style="left:160px;top:1388px;width:20px;height:19px;background:#d8d8d8;"></div><div class="mz" style="left:180px;top:1388px;width:20px;height:19px;background:#e0eefa;"></div><div class="mz" style="left:200px;top:1388px;width:20px;height:19px;background:#d8d8dc;"></div><div class="mz" style="left:220px;top:1388px;width:20px;height:19px;background:#d8d4d4;"></div><div class="mz" style="left:240px;top:1388px;width:20px;height:19px;background:#bcb0ac;"></div><div class="mz" style="left:260px;top:1388px;width:12px;height:19px;background:#d8d8d4;border-radius:0 10px 10px 0"></div><div class="mz" style="left:1420px;top:458px;width:20px;height:10px;background:#c8e4fc;border-radius:6px 0 0 0"></div><div class="mz" style="left:1440px;top:448px;width:20px;height:20px;background:#98c8fc;"></div><div class="mz" style="left:1460px;top:450px;width:20px;height:18px;background:#98c8fc;"></div><div class="mz" style="left:1480px;top:454px;width:20px;height:14px;background:#90c8fc;"></div><div class="mz" style="left:1500px;top:454px;width:20px;height:14px;background:#c8e8fc;"></div><div class="mz" style="left:1520px;top:456px;width:6px;height:16px;background:#b0ccfc;border-radius:0 6px 6px 0"></div><div class="mz" style="left:1440px;top:468px;width:20px;height:15px;background:#dce4fc;"></div><div class="mz" style="left:1460px;top:468px;width:20px;height:8px;background:#c8e4fc;"></div><div class="mz" style="left:1480px;top:468px;width:20px;height:8px;background:#98ccfc;"></div><div class="mz" style="left:1500px;top:468px;width:20px;height:7px;background:#c8e8fc;"></div><div class="mz" style="left:1385px;top:790px;width:15px;height:36px;background:#c8e0fc;border-radius:10px 0 0 10px"></div><div class="mz" style="left:1420px;top:790px;width:20px;height:18px;background:#b0c8fc;"></div><div class="mz" style="left:1440px;top:790px;width:20px;height:18px;background:#b8c8fc;"></div><div class="mz" style="left:1460px;top:790px;width:20px;height:36px;background:#b8e0fc;"></div><div class="mz" style="left:1480px;top:790px;width:20px;height:36px;background:#c8e4fc;"></div><div class="mz" style="left:1500px;top:790px;width:20px;height:18px;background:#90c8fc;"></div><div class="mz" style="left:1520px;top:790px;width:20px;height:36px;background:#ece8fc;"></div><div class="mz" style="left:1540px;top:795px;width:20px;height:13px;background:#e8e8fc;"></div><div class="mz" style="left:1560px;top:797px;width:20px;height:11px;background:#e4f8fc;"></div><div class="mz" style="left:1400px;top:808px;width:20px;height:18px;background:#dce4fc;"></div><div class="mz" style="left:1440px;top:808px;width:20px;height:18px;background:#ece8fc;"></div><div class="mz" style="left:1500px;top:808px;width:20px;height:18px;background:#c8e0fc;"></div><div class="mz" style="left:1560px;top:808px;width:20px;height:18px;background:#f8f8fc;"></div><div class="mz" style="left:1420px;top:1019px;width:40px;height:9px;background:#f6f9ff;"></div><div class="mz" style="left:1480px;top:1018px;width:20px;height:10px;background:#b8d0fc;border-radius:6px 6px 0 0"></div><div class="mz" style="left:1480px;top:1028px;width:20px;height:20px;background:#90c8fc;"></div><div class="mz" style="left:1500px;top:1028px;width:20px;height:20px;background:#c8e8fc;"></div><div class="mz" style="left:1520px;top:1028px;width:20px;height:18px;background:#90c4fc;border-radius:0 8px 8px 0"></div><div class="mz" style="left:1440px;top:1128px;width:20px;height:20px;background:#90c8fc;border-radius:0 6px 0 0"></div><div class="mz" style="left:1460px;top:1136px;width:20px;height:12px;background:#c0e0fc;"></div><div class="mz" style="left:1480px;top:1137px;width:20px;height:11px;background:#f0fcff;"></div><div class="mz" style="left:1430px;top:1148px;width:10px;height:20px;background:#f8fcff;"></div><div class="mz" style="left:1440px;top:1148px;width:20px;height:20px;background:#f4fcff;"></div><div class="mz" style="left:1460px;top:1148px;width:20px;height:20px;background:#c8e4fc;"></div><div class="mz" style="left:1480px;top:1148px;width:20px;height:20px;background:#b4e0fc;border-radius:0 0 8px 0"></div><div class="mz" style="left:1420px;top:1248px;width:20px;height:20px;background:#c8e4fc;border-radius:6px 0 0 0"></div><div class="mz" style="left:1440px;top:1248px;width:20px;height:20px;background:#98c8fc;"></div><div class="mz" style="left:1460px;top:1250px;width:20px;height:18px;background:#98c8fc;"></div><div class="mz" style="left:1480px;top:1254px;width:17px;height:14px;background:#98c8fc;"></div><div class="mz" style="left:1440px;top:1268px;width:20px;height:20px;background:#dce0fc;"></div><div class="mz" style="left:1460px;top:1268px;width:20px;height:20px;background:#c8e4fc;"></div><div class="mz" style="left:1480px;top:1268px;width:10px;height:15px;background:#98c8fc;border-radius:0 0 8px 0"></div><div class="mz" style="left:1440px;top:1368px;width:20px;height:20px;background:#dce0fc;"></div><div class="mz" style="left:1460px;top:1368px;width:20px;height:20px;background:#c8e4fc;"></div><div class="mz" style="left:1480px;top:1368px;width:5px;height:20px;background:#98c8fc;"></div><div class="mz" style="left:1440px;top:1388px;width:20px;height:19px;background:#a8d0fc;"></div><div class="mz" style="left:1460px;top:1388px;width:20px;height:19px;background:#dcf4fc;border-radius:0 0 8px 0"></div><div class="mz" style="left:1480px;top:1388px;width:5px;height:12px;background:#c8e4fc;"></div>
</body>
</html>
